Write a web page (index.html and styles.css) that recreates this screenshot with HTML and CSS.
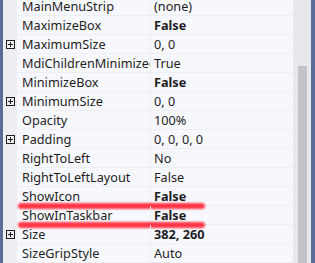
FILE: index.html
```html
<!DOCTYPE html>
<html lang="en">
<head>
    <meta charset="UTF-8">
    <meta name="viewport" content="width=device-width, initial-scale=1.0">
    <title>Properties</title>
    <link rel="stylesheet" href="styles.css">
</head>
<body>
    <div class="frame">
        <div class="edge"></div>
        <div class="grid">
            <div class="row"><div class="gutter"></div><div class="name">MainMenuStrip</div><div class="value">(none)</div></div>
            <div class="row"><div class="gutter"></div><div class="name">MaximizeBox</div><div class="value bold">False</div></div>
            <div class="row"><div class="gutter"><span class="plus"></span></div><div class="name">MaximumSize</div><div class="value">0, 0</div></div>
            <div class="row"><div class="gutter"></div><div class="name">MdiChildrenMinimizedAnchorBottom</div><div class="value">True</div></div>
            <div class="row"><div class="gutter"></div><div class="name">MinimizeBox</div><div class="value bold">False</div></div>
            <div class="row"><div class="gutter"><span class="plus"></span></div><div class="name">MinimumSize</div><div class="value">0, 0</div></div>
            <div class="row"><div class="gutter"></div><div class="name">Opacity</div><div class="value">100%</div></div>
            <div class="row"><div class="gutter"><span class="plus"></span></div><div class="name">Padding</div><div class="value">0, 0, 0, 0</div></div>
            <div class="row"><div class="gutter"></div><div class="name">RightToLeft</div><div class="value">No</div></div>
            <div class="row"><div class="gutter"></div><div class="name">RightToLeftLayout</div><div class="value">False</div></div>
            <div class="row marked"><div class="gutter"></div><div class="name">ShowIcon</div><div class="value bold">False</div></div>
            <div class="row marked"><div class="gutter"></div><div class="name">ShowInTaskbar</div><div class="value bold">False</div></div>
            <div class="row"><div class="gutter"><span class="plus"></span></div><div class="name">Size</div><div class="value bold">382, 260</div></div>
            <div class="row"><div class="gutter"></div><div class="name">SizeGripStyle</div><div class="value">Auto</div></div>
        </div>
        <div class="scrollbar"><div class="thumb"></div></div>
        <div class="edge right"></div>
    </div>
</body>
</html>
```

FILE: styles.css
```css
body {
    margin: 0;
    overflow: hidden;
    font-family: "Noto Sans", "Open Sans", sans-serif;
    font-size: 12.7px;
    color: #1e1e1e;
}

.frame {
    display: flex;
    height: 263px;
    overflow: hidden;
    background-color: #f7f8fd;
}

.edge {
    width: 3px;
    background-color: #5d6b99;
}

.edge.right {
    width: 4px;
}

.grid {
    flex: 1;
    margin-top: -3px;
    overflow: hidden;
}

.row {
    display: flex;
    height: 18px;
    border-bottom: 1px solid #eceef4;
    position: relative;
}

.gutter {
    width: 14px;
    flex-shrink: 0;
    background-color: #eeeef2;
    display: flex;
    align-items: center;
    justify-content: center;
    margin-bottom: -1px;
}

.plus {
    width: 9px;
    height: 9px;
    box-sizing: border-box;
    border: 1px solid #1e1e1e;
    position: relative;
}

.plus::before,
.plus::after {
    content: "";
    position: absolute;
    background-color: #1e1e1e;
}

.plus::before {
    left: 1px;
    top: 3px;
    width: 5px;
    height: 1px;
}

.plus::after {
    left: 3px;
    top: 1px;
    width: 1px;
    height: 5px;
}

.name {
    width: 128px;
    flex-shrink: 0;
    padding-left: 5px;
    border-right: 1px solid #eceef4;
    line-height: 18px;
    white-space: nowrap;
    overflow: hidden;
}

.value {
    flex: 1;
    padding-left: 3px;
    line-height: 18px;
    white-space: nowrap;
    overflow: hidden;
}

.value.bold {
    font-weight: bold;
}

.row.marked::after {
    content: "";
    position: absolute;
    left: 15px;
    width: 187px;
    bottom: -4px;
    height: 6px;
    border-radius: 3px;
    background-color: #ff3646;
    filter: blur(1px);
}

.scrollbar {
    width: 18px;
    background-color: #e8e8ec;
    display: flex;
    justify-content: center;
    padding-top: 66px;
    box-sizing: border-box;
}

.thumb {
    width: 9px;
    height: 220px;
    flex-shrink: 0;
    background-color: #c2c3c9;
}
```
